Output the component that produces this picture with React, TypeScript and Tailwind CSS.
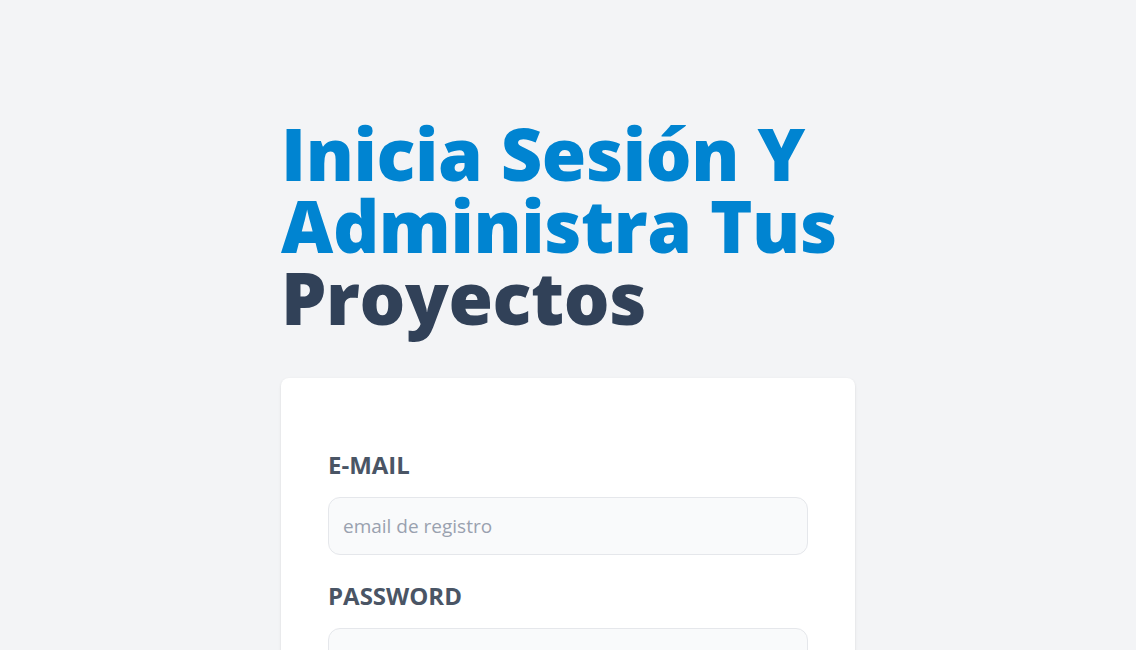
import React from "react";

export default function App() {
  return (
    <div
      className="min-h-screen bg-gray-100"
      style={{ fontFamily: '"Open Sans", "Noto Sans", sans-serif' }}
    >
      <div className="mx-auto w-[574px] pt-[117px]">
        <h1 className="text-7xl font-extrabold tracking-[-0.4px] text-sky-600">
          Inicia Sesión Y Administra Tus{" "}
          <span className="text-slate-700">Proyectos</span>
        </h1>
        <form className="mt-[45px] rounded-lg bg-white px-[47px] pt-[71px] pb-10 shadow">
          <div>
            <label className="block text-2xl font-bold uppercase text-gray-600">
              E-mail
            </label>
            <input
              type="email"
              placeholder="email de registro"
              className="mt-[16px] block h-[58px] w-full rounded-xl border border-gray-200 bg-gray-50 px-[14px] text-[19px] text-gray-700 placeholder-gray-400 outline-none"
            />
          </div>
          <div className="mt-[25px]">
            <label className="block text-2xl font-bold uppercase text-gray-600">
              Password
            </label>
            <input
              type="password"
              placeholder="password de registro"
              className="mt-[16px] block h-[58px] w-full rounded-xl border border-gray-200 bg-gray-50 px-[14px] text-[19px] text-gray-700 placeholder-gray-400 outline-none"
            />
          </div>
          <input
            type="submit"
            value="Iniciar Sesión"
            className="mt-8 w-full rounded-xl bg-sky-700 py-3 font-bold uppercase text-white"
          />
        </form>
      </div>
    </div>
  );
}
